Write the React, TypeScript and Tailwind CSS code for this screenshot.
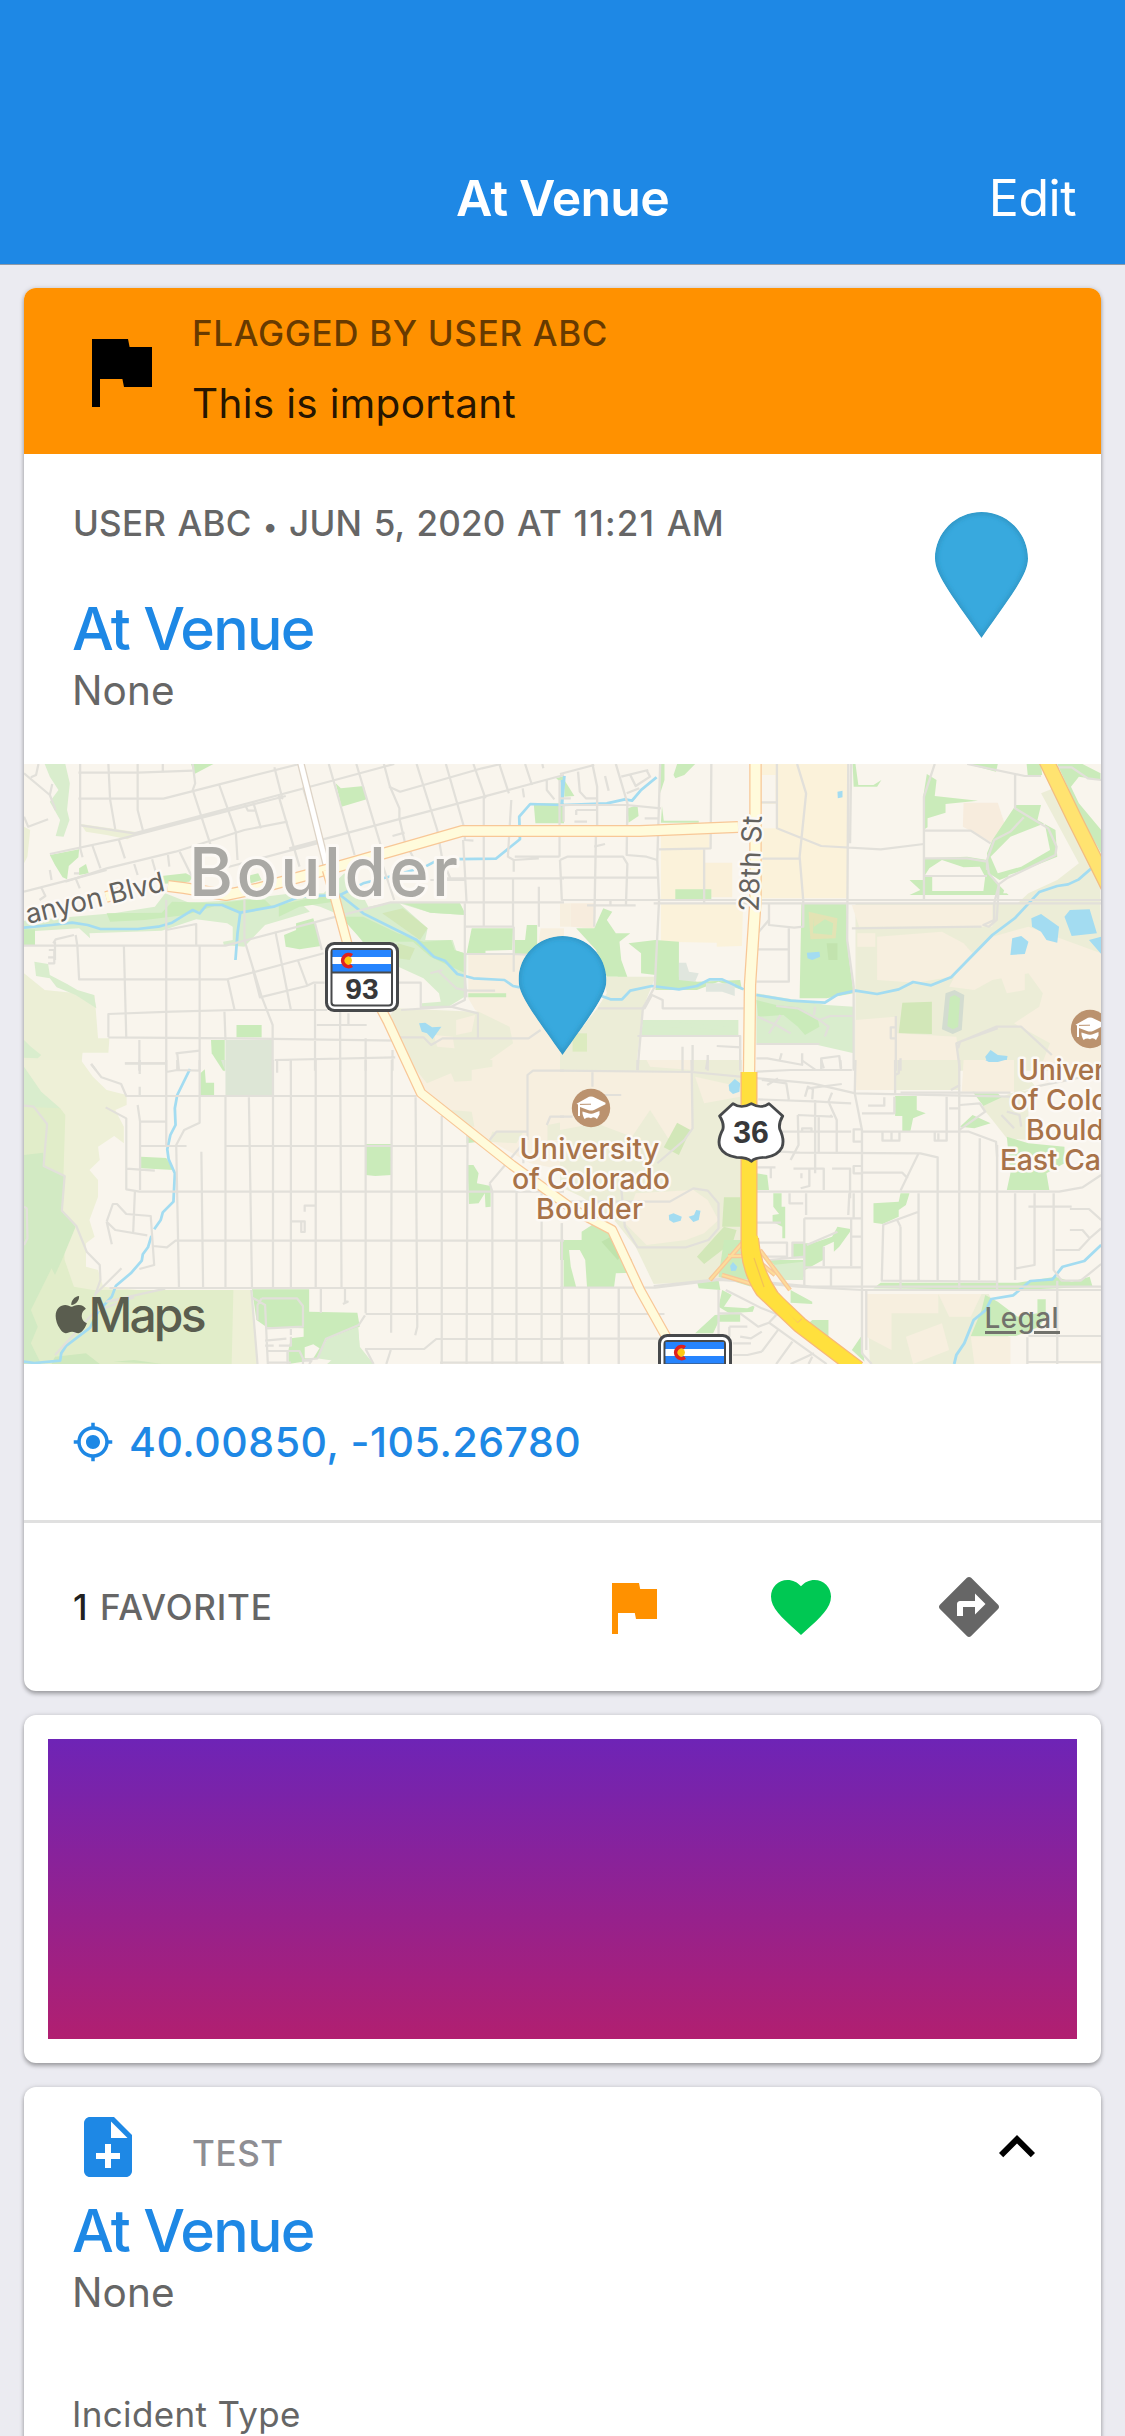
import React from "react";
import { FaApple } from "react-icons/fa";

const PIN_PATH =
  "M44 0C68.3 0 88 19.7 88 44C88 58 76 74 44 119C12 74 0 58 0 44C0 19.7 19.7 0 44 0Z";

function PinShape({ id }: { id: string }) {
  return (
    <>
      <defs>
        <clipPath id={`${id}-clip`}>
          <path d={PIN_PATH} />
        </clipPath>
        <filter id={`${id}-soft`} x="-20%" y="-20%" width="140%" height="140%">
          <feGaussianBlur stdDeviation="2.4" />
        </filter>
      </defs>
      <g clipPath={`url(#${id}-clip)`}>
        <path d={PIN_PATH} fill="#38a9de" />
        <path d={PIN_PATH} fill="none" stroke="#2a86b0" strokeWidth="2.4" filter={`url(#${id}-soft)`} />
      </g>
    </>
  );
}

function MaterialIcon({ d, className }: { d: string; className: string }) {
  return (
    <svg viewBox="0 0 24 24" fill="currentColor" className={className}>
      <path d={d} />
    </svg>
  );
}

const ICONS = {
  flag: "M14.4 6L14 4H5v17h2v-7h5.6l.4 2h7V6z",
  heart:
    "M12 21.35l-1.45-1.32C5.4 15.36 2 12.28 2 8.5 2 5.42 4.42 3 7.5 3c1.74 0 3.41.81 4.5 2.09C13.09 3.81 14.76 3 16.5 3 19.58 3 22 5.42 22 8.5c0 3.78-3.4 6.86-8.55 11.54L12 21.35z",
  directions:
    "M21.71 11.29l-9-9c-.39-.39-1.02-.39-1.41 0l-9 9c-.39.39-.39 1.02 0 1.41l9 9c.39.39 1.02.39 1.41 0l9-9c.39-.38.39-1.01 0-1.41zM14 14.5V12h-4v3H8v-4c0-.55.45-1 1-1h5V7.5l3.5 3.5-3.5 3.5z",
  gps: "M12 8c-2.21 0-4 1.79-4 4s1.79 4 4 4 4-1.79 4-4-1.79-4-4-4zm8.94 3A8.994 8.994 0 0 0 13 3.06V1h-2v2.06A8.994 8.994 0 0 0 3.06 11H1v2h2.06A8.994 8.994 0 0 0 11 20.94V23h2v-2.06A8.994 8.994 0 0 0 20.94 13H23v-2h-2.06zM12 19c-3.87 0-7-3.13-7-7s3.13-7 7-7 7 3.13 7 7-3.13 7-7 7z",
  noteAdd:
    "M14 2H6c-1.1 0-1.99.9-1.99 2L4 20c0 1.1.89 2 1.99 2H18c1.1 0 2-.9 2-2V8l-6-6zm2 14h-3v3h-2v-3H8v-2h3v-3h2v3h3v2zm-3-7V3.5L18.5 9H13z",
  expandLess: "M12 8l-6 6 1.41 1.41L12 10.83l4.59 4.58L18 14z",
};

/* Each map tile is drawn in its own local units and scaled into place. */
type Area = [string, string];
type Tile = { transform: string; areas: Area[]; streets: string[]; rivers: string[] };

const G = "#caebba";
const LG = "#d9edcd";
const OL = "#ecedd7";
const BE = "#f7efdf";
const TAN = "#fbf2da";
const W = "#a3dcf1";
const LAND = "#f9f5ed";

const TILES: Tile[] = [
  {
    transform: "translate(24 760) scale(0.34439 0.33333)",
    areas: [
      ["M0 640L60 690 205 705 215 835 248 835 245 878 170 878 165 932H0Z", "#ecefd6"],
      ["M30 605L70 612 75 645 125 672 155 690 203 705 210 745 150 705 95 682 75 655 35 648Z", LG],
      ["M0 840L20 860 50 885 40 895 0 893Z", LG],
      ["M0 200L18 210 10 290 0 310Z", "#ecefd6"],
      ["M60 12H120L133 70 125 150 132 180 115 230 92 228 105 180 75 125 100 90 75 50Z", LG],
      ["M75 285L160 268 158 292 130 318 125 358 112 352 90 315Z", G],
      ["M160 325L180 312 188 340 160 345Z", G],
      ["M485 12H550L495 42Z", G],
      ["M905 70L920 85 987 78 995 118 922 140 915 110Z", G],
      ["M165 192L340 218 300 238 240 225 180 215Z", "#ecefd6"],
      ["M0 482L140 470 260 460 380 440 410 400 480 428 620 420 780 400 870 400 930 340 985 410 1000 440 1060 428 1265 428 1283 465 1180 458 1090 430 1172 505 1165 540 1245 540 1255 572 1285 582 1283 708 1230 742 1155 742 1155 730 1210 725 1205 700 1160 655 1090 622 1040 548 985 548 930 470 860 440 800 425 830 455 700 495 640 560 580 555 578 545 606 540 606 500 590 490 500 478 400 512 190 520 192 535 160 505 0 515Z", LG],
      ["M380 350L470 340 490 350 480 365 400 372Z", G],
      ["M640 350L680 340 690 360 640 375Z", G],
      ["M240 460L400 458 430 425 580 430 470 465 350 480 250 485Z", G],
      ["M565 430L640 420 700 420 720 440 640 460 600 450Z", G],
      ["M740 435L850 410 900 410 900 425 800 440 740 470Z", G],
      ["M920 470L985 470 1085 520 1160 545 1240 540 1250 570 1280 580 1283 640 1240 620 1180 590 1130 545 1040 545 985 545Z", G],
      ["M1100 430L1265 428 1283 465 1180 458Z", G],
      ["M1040 460L1100 445 1172 505 1150 540Z", "#d2e7b8"],
      ["M1085 550L1135 565 1120 600 1085 595Z", "#d2e7b8"],
      ["M755 525L790 510 790 490 840 475 862 558 800 568 760 560Z", G],
      ["M0 508H32V555H0Z", G],
      ["M1300 505H1420L1418 570 1340 572 1340 582H1285Z", G],
      ["M1425 540H1455L1460 495H1490L1490 582H1425Z", G],
      ["M1480 130H1568V190H1485Z", G],
      ["M1545 55L1568 48V75Z", G],
      ["M1080 745L1310 755 1568 700V932H1135L1050 780Z", OL],
      ["M1290 585H1568V932H1360L1345 905 1420 850 1410 800 1310 750 1290 715Z", BE],
      ["M1500 505H1568V585H1490Z", BE],
      ["M1255 780L1310 765 1300 815 1255 825Z", BE],
      ["M1190 825L1245 830 1250 865 1200 860Z", BE],
      ["M1290 700H1400V712H1290Z", G],
      ["M617 795H690V832H617Z", G],
      ["M543 840H583V932H578L545 880Z", G],
      ["M585 840H722V932H585Z", "#dde6d6"],
      ["M1147 790L1165 788 1185 802 1212 800 1186 838 1170 820 1155 815Z", W],
    ],
    streets: [
      "M0 40L75 105 92 150M42 12L35 45 20 52M75 105L82 72M0 170L12 200 70 178",
      "M163 12V265L170 292M158 38H330L490 32M158 116H405L635 55 800 12M245 12L250 118 265 208M330 12V150L345 210M403 12V38",
      "M165 196L320 220 860 72 1075 12M75 282L275 238 760 108M120 365L240 325 440 275 640 210 765 185",
      "M0 395L150 355 240 330M275 238L293 295M198 255L222 325M320 312L330 345M372 298L385 345M418 285L422 320M452 275L490 355M50 382L62 408 45 420M75 330L80 360M145 340H160M150 355L162 385",
      "M490 12L497 70 490 90 545 265M567 75L615 215 620 300M640 130L650 152H670M665 125L688 205M727 22L750 115 740 110 800 320M810 82L830 150",
      "M885 12L960 285M965 12L1040 270M1045 12L1062 78 1090 145V175L1110 265M1140 12L1200 210 1215 300M1225 12L1280 210V240L1305 242M1305 12L1340 115M1380 12L1408 100M1455 12L1475 75M1505 12L1508 25",
      "M770 265L1335 110 1568 45M560 330L870 245M1060 80L1092 95 1330 25 1385 12M1070 228L1105 218M1335 110V500M1415 120L1405 290 1422 300V335M1448 85L1452 112M1518 60V90L1540 118",
      "M1220 355H1568M1422 300L1495 295M1425 290L1555 290M1555 60V290M1275 240L1285 425M1215 300L1240 360M1120 272L1165 360M1180 360H1280M1033 290L1075 420",
      "M413 420V932M413 510L500 492V555M0 557H585L1065 427H1568M640 420L640 540 690 710 722 795V932M510 557V932M290 557L297 835M150 525L155 558 160 658H590L870 580M85 550L92 538 145 525",
      "M72 570H88V610H70M70 592H88M90 545V600M730 515L775 750M592 660L612 752M665 630L685 712 820 678 840 668 873 668M795 600L822 675M845 490L865 570",
      "M245 832V762L430 755 610 750H880M245 832L610 835 1085 842M582 755L585 840M845 672V932M1080 668H1152V742L1240 740 1280 720V430M1095 750L1240 740 1318 760V832M1085 832H1160L1182 855 1215 835H1465L1500 810",
      "M850 795H995M942 760V795M918 755V932M992 835V932M728 900L1078 892M1070 870V932M775 900V932M335 840V932M440 880L510 872M445 880L450 932M293 910H413M195 912L210 932",
      "M1283 500H1420V355M1283 582H1420L1568 590M1495 380V500M1422 500V635M1205 635L1255 685 1290 692H1368M1180 640L1215 630M1285 712L1280 650",
    ],
    rivers: [
      "M0 503L80 495 140 488 185 495 222 507H330L390 500 430 488 490 450 510 460 530 435 575 435 628 458 725 440 800 410 918 405 985 460 1140 540 1190 590 1222 602 1258 642 1305 655 1395 660 1420 678 1440 682",
      "M628 458L620 520 614 600M918 405L985 370 1080 345 1165 320 1205 298 1370 296 1440 238 1438 170 1470 132 1562 135V60",
    ],
  },
  {
    transform: "translate(560 760) scale(0.36033 0.33333)",
    areas: [
      ["M560 12H800V415H560Z", TAN],
      ["M560 45H598V125H560ZM560 132H600V205H560Z", LAND],
      ["M280 222H415V268H280ZM280 270H400V420H280Z", TAN],
      ["M402 308H478V412H402Z", "#faf0d9"],
      ["M280 432H508L505 558 435 560 435 548 280 545Z", TAN],
      ["M320 388H420V418H320Z", G],
      ["M278 12H290V60L278 100ZM315 45L325 12H375L345 45 320 55Z", G],
      ["M12 60L40 108 12 110Z", G],
      ["M188 145L215 135 218 168 190 188Z", G],
      ["M283 138L288 182H385V188H280Z", G],
      ["M0 430H30V500L95 505 100 450 50 455V500H0Z", BE],
      ["M30 430H95V505L30 500Z", "#f7ecdd"],
      ["M45 505L95 505 120 445 145 455 130 480 155 520 195 520 165 545 170 600 190 660 165 660 160 650 130 650 100 570Z", G],
      ["M190 550L265 540 330 545V650L380 665 500 660 505 690 440 665 380 690H265L265 645 225 640 225 580Z", G],
      ["M330 608H350L358 635 385 640 375 665 330 660Z", "#e0e6de"],
      ["M405 670H485V708L450 695H405Z", "#e0e6de"],
      ["M120 650L265 650 230 745 210 932H0V885L100 750 130 700Z", OL],
      ["M35 820H75V875H35Z", "#dcebc0"],
      ["M230 780H495V830L225 828Z", LG],
      ["M232 780H492V750L260 745Z", LAND],
      ["M225 780L480 800 490 815 390 805 230 798Z", LG],
      ["M265 705L500 715V745L290 740Z", LAND],
      ["M545 700L740 735 815 740V880L715 855 545 850Z", LG],
      ["M550 770L620 765 660 800 680 825 720 800 715 775 660 742 600 735 545 720Z", G],
      ["M670 432H795L800 580 815 700 740 715 665 715Z", G],
      ["M690 455L770 475 765 535 695 538ZM705 470L702 520 755 525 758 490 735 478 705 500Z", "#e3e3b4"],
      ["M740 550H770V600H745Z", "#c2e3ae"],
      ["M812 12H820L828 75H870L892 60 880 80H815Z", G],
      ["M1018 42L1045 60 1040 108 1160 122 1070 132 1070 158 1020 175V202L1008 210V110Z", G],
      ["M1130 12H1215L1210 35Z", G],
      ["M1295 12H1335L1338 45H1298Z", G],
      ["M1380 12H1450L1500 40V60L1440 50 1418 80 1440 130 1502 210V280L1450 180Z", G],
      ["M1120 128H1215L1238 205 1200 248 1118 200Z", "#f7ecdd"],
      ["M1335 100L1380 80 1500 320V480H1502V932H820V430H1270L1300 400 1380 360 1440 310Z", OL],
      ["M810 435H1200V500H830Z", BE],
      ["M1265 135H1335L1325 180 1375 210 1380 290 1220 360 1190 340 1185 280 1200 240Z", G],
      ["M1250 230L1345 190 1360 270 1280 320 1215 340 1195 290Z", LAND],
      ["M1012 295L1130 290 1185 300 1200 355 1245 405H970L1000 390 970 360H1010Z", G],
      ["M1025 325L1060 300 1120 322 1165 320 1180 350 1175 393H1033V350H1010Z", LAND],
      ["M1245 345L1400 290 1420 320 1300 360 1280 400 1230 400Z", LAND],
      ["M880 530L1060 515 1120 550 1145 580 1085 650 990 668 880 660Z", BE],
      ["M825 520H875V560H825ZM820 780L930 770 935 932H820Z", BE],
      ["M1120 600L1200 530 1300 500 1502 580V932H1330L1360 850 1260 790 1330 740 1340 700 1300 640 1200 660 1150 690 1080 680Z", BE],
      ["M1220 640L1290 630V690L1240 700Z", BE],
      ["M950 728L1032 725V822L940 820Z", "#d2e7b8"],
      ["M1070 700L1095 690 1122 705 1115 810 1090 822 1060 808Z", "#d3dcd0"],
      ["M1082 712L1095 705 1110 715 1105 800 1090 808 1075 798Z", "#caebba"],
      ["M935 820L1100 830 1110 932H935Z", BE],
      ["M1308 475L1335 462 1385 500 1380 548 1350 540 1335 515 1310 500ZM1400 470L1415 450 1470 448 1490 520 1420 528ZM1255 535L1280 528 1300 545 1290 582 1250 585ZM1468 540L1502 530V582ZM770 95L784 92V112L771 115ZM685 578L720 575 722 590 700 600 687 595ZM1180 890L1195 870 1215 885 1242 888 1240 900 1185 905Z", W],
    ],
    streets: [
      "M0 42L95 15M50 35L55 95 72 115H100M90 12L103 80V210M155 12L187 130 185 285 240 290 270 300M170 50L245 30M195 45L210 78 250 50 240 30M125 48L135 92M185 100L220 85M0 115H30M45 150H105M45 150V165M40 185H75M10 135V185M100 210L95 500M235 175H275",
      "M278 12L270 300 275 420 263 680 230 745 215 932M420 12L418 265 275 268M0 300L20 290H175L187 312 183 435M0 300L5 420H1502M0 353H270M95 260L125 252M140 420V435M75 436H210M0 135H185L280 145",
      "M400 268V430M602 12V205L725 258 890 268 1010 252M558 127H602M658 12L683 100 665 290 675 420V500L650 503 580 495V430M560 296H665M808 12L805 250M800 12L797 540 815 680V932",
      "M260 430H1502M1010 420V110L1040 12M1010 212H1140L1195 250M1010 295H1130L1185 305V330M1010 348H1185M1263 40V145L1355 205 1378 260 1375 285 1240 355 1215 375M1130 12L1290 48H1335M1287 172L1250 215 1205 240 1185 300 1190 340 1218 375 1205 430M1380 22H1420L1465 55 1502 60",
      "M1218 375L1212 480 1190 500 1175 495 1205 480V430M810 505L1170 500M580 480L548 520V562M545 568H635M635 505V665H545M105 745H235L255 705 285 720V745H510M215 828H500V932M340 860V932M368 855V932M410 885V932M435 858L503 862",
      "M548 770L600 795 640 820M580 820L612 765M600 738L660 745 720 780 750 768H812M720 780L745 800 735 830M708 740L705 765M545 852H720M545 895H575L675 915M615 880L610 900M672 880V915M725 932V895L775 888 780 932M932 768V932M930 802H918V835H930M945 895V932",
      "M1110 932L1100 850 1210 800H1280L1365 885M1105 865L1110 845 1215 805",
    ],
    rivers: [
      "M12 48L5 135 130 130 180 118 200 122 225 90 268 52",
      "M115 708L140 718H172L195 692 255 678 330 688 380 678 415 658H450L510 688M545 705L640 722 735 728 770 704 820 692 880 702 940 688 980 666 1030 676 1085 652 1200 525 1262 475 1330 396 1380 378 1410 373 1440 358 1475 325",
    ],
  },
  {
    transform: "translate(24 1060) scale(0.34439 0.33333)",
    areas: [
      ["M0 0H165L200 50 240 90 298 105V135L265 150 290 200V250L262 228 215 260 220 300 190 330 215 360 215 410 190 480 205 530 180 550V620L215 630 230 680 330 690H660L678 912H0Z", "#eef0d7"],
      ["M0 20L50 95 105 145V165L0 145Z", LG],
      ["M0 140L105 145 120 165 112 430 118 600 145 680 200 690H608L603 912H0Z", "#e1edc9"],
      ["M0 285L55 278 60 320 120 348 110 450 150 500 110 600 90 645 80 625 20 750 40 800 20 850 50 912H0Z", "#d2eac3"],
      ["M80 912L90 890 180 880 220 912ZM260 905L320 900 400 912Z", "#cfe8bd"],
      ["M570 0L583 0V35ZM512 40L525 28 528 68H552V108H512Z", G],
      ["M572 0H583V30ZM585 0H722V105H585Z", "#dde6d6"],
      ["M340 290L413 294 435 330 340 325Z", G],
      ["M992 252H1067V345L1020 348 992 345Z", G],
      ["M1288 315L1305 315 1320 340 1315 370 1355 378V440L1340 442 1338 400 1320 430 1292 432Z", G],
      ["M1285 225L1320 245 1285 250Z", G],
      ["M1115 0H1568V330L1470 310 1290 205 1165 90Z", BE],
      ["M1115 0H1360V20L1300 30V62L1250 65 1240 40 1170 70ZM1240 150L1300 155 1308 200 1270 195ZM1520 195L1568 185V240H1520ZM1360 215H1450L1430 250 1350 245Z", OL],
      ["M662 688H828V755L968 758 975 800 880 838 850 895 810 905 768 912V870L775 835 812 830V805L705 802 675 780Z", G],
      ["M970 800L975 860 1015 912H880L950 850Z", LG],
      ["M850 895L880 838 970 800 975 870 920 905Z", LG],
      ["M815 862L840 853 858 865 840 895 815 895Z", LAND],
    ],
    streets: [
      "M0 137L28 140 67 192 57 318 118 348 110 452 152 498 182 575 220 615 222 660 205 710M0 440L8 445 10 535 0 555M195 12L225 52 282 72 297 108H1140M293 10H413M336 0V42M336 80V105M413 0V255M413 36L445 30 510 32M445 0V30M510 0V188L465 210 442 255 450 683M237 142L297 175V388L335 395H1568M330 135L337 185V390M337 185H413M337 258H472M297 326L380 332",
      "M240 485L258 432H270L297 462 368 468 378 615 335 627M240 485L265 510 358 526M240 485L255 553M322 395L317 518M375 558L415 562 440 542H1568M515 275L520 683M585 110V683M585 258H1288M653 112L662 683M248 684H1568M723 0V683M775 0V683M847 0V683M918 0L922 683M992 0V760M1068 0L1066 818M1137 112L1142 800 1136 826M1213 168V912M1288 220L1285 912M1360 395V912M1430 395V912M1503 400V912M1562 490V912",
      "M845 437H815V455M775 484H815V516H805V484M735 38V0H770M283 625L210 700M320 712L240 725 410 686M320 712L205 755 90 885M660 690L678 912M662 712L700 735 708 912M690 715H793L810 738V800L705 805M678 780V735L690 715M862 685V758M932 685V725H940L926 732M992 762H1568M990 766L972 795 877 836 852 895 810 900M990 867H1162L1197 837H1568M992 867L1015 912M1065 870L1052 912M1208 908H1568M700 842L762 836M700 857H725M740 857H775V830M775 800V825M706 873H800L810 895V912M765 873V912M808 902H835L828 912M708 908H775M1352 370L1360 395M1352 370L1450 250V310M1352 240L1372 215H1462V45L1478 32H1568M1462 215V240M1518 195L1528 170H1568",
    ],
    rivers: [
      "M482 27L445 105 438 145 440 195 425 225 416 268 420 298 438 340 434 425 403 457 397 480 378 508M370 528L360 562 345 583 342 602 310 640 267 677 255 710 215 755 192 803 122 858 108 880 105 902 30 909 0 905",
    ],
  },
  {
    transform: "translate(560 1060) scale(0.36033 0.33333)",
    areas: [
      ["M0 0H505V660L260 672 210 560 150 480 60 410 0 380Z", OL],
      ["M0 35L365 36 370 210 300 235 250 150 200 230 100 190 0 210ZM375 50L500 80 500 110 400 130ZM180 490L210 400 370 390 410 420 440 480 400 520 350 540 240 555Z", BE],
      ["M240 0L365 0 365 30 250 20Z", BE],
      ["M325 188L362 210 330 285 288 262Z", "#d2e7b8"],
      ["M455 412H500V500H450ZM455 500L490 510 480 545 400 612 380 590Z", "#d2e7b8"],
      ["M0 540H60V515L110 480 145 500 170 550 200 600V638L155 640 150 682H75L70 600 55 570 25 570 30 620 45 682H10V600H0Z", G],
      ["M115 545L160 520 185 570 160 600Z", "#bfe3ac"],
      ["M545 340L575 345 580 390H545ZM592 400H615V440H625V535H617V500L590 485V465L608 462 592 440Z", G],
      ["M645 550H700L755 530 770 500 810 508 775 560 760 575V545L730 560V600L680 630V595H645Z", G],
      ["M580 600H680V650H630Z", G],
      ["M590 615L675 605V660H620Z", LG],
      ["M930 108H990V150L1015 160 980 175 972 215H950V168H930Z", G],
      ["M820 0H930V90H820ZM1120 0H1260V95H1115Z", BE],
      ["M930 0H1110V90H930ZM1260 0L1320 80 1260 100Z", OL],
      ["M1110 200L1145 165 1195 190 1150 205ZM1145 95L1215 100 1240 130 1180 145Z", G],
      ["M1170 140L1250 100 1300 90 1300 240 1240 235 1200 180Z", OL],
      ["M1240 230L1300 250 1400 260V310L1350 340 1358 390 1240 390 1250 340Z", G],
      ["M870 430L940 425 945 400H970L960 435 940 450V470L895 492 870 488Z", G],
      ["M870 685L890 668H1270L1375 650 1420 665 1470 650 1478 680 1270 690Z", G],
      ["M852 702H1190L1245 830V912H860Z", OL],
      ["M852 702H1050V760H920V870L850 830ZM1050 702H1170L1140 770 1080 770ZM960 830L1060 790 1080 870 980 912ZM1140 830H1250V912H1150Z", BE],
      ["M1180 705L1215 725 1270 770 1325 760V718H1348V770L1330 800 1265 828H1140L1170 750Z", G],
      ["M455 540L505 540 500 570 530 680 440 650Z", G],
      ["M380 665L440 660 445 690 385 685ZM450 690L540 740 535 755 470 760 440 740Z", G],
      ["M480 700L540 735 520 745 455 740Z", LAND],
      ["M640 690L700 725V732L640 728ZM700 780H745V830L690 790ZM810 870L835 830 845 905Z", G],
      ["M375 820L430 765 500 760V785L440 785 425 820Z", G],
      ["M468 75L485 57 500 70 498 95 480 102 470 92ZM302 465L315 460 338 470 335 482 315 488 303 480ZM357 470L372 465 378 450 390 452 385 480 370 486ZM472 618L480 606 492 620 488 632 475 633ZM1180 0H1235L1215 6H1190Z", W],
    ],
    streets: [
      "M0 32L365 36 500 50 700 70 820 100 1250 110M90 32V80M365 0L368 205 345 240 270 310M215 0V30M410 0L405 28M75 105H170M0 170H35M0 425H305L370 385 410 392 440 430V505L412 540 350 562H215L180 500 170 385M5 490V912M0 683H265L440 660 520 665 660 680 840 690H1502M80 683V912M163 683V912M0 762H290M0 836H305",
      "M260 678L460 655 700 680H1502M545 35L640 30 810 30M670 0L710 30M725 0L732 25M778 0L780 25M820 0L818 100 838 210V880L865 912M850 690V870M605 55L575 75M560 60L628 70 635 118M550 118L720 125 765 128 808 130M680 110L688 80 702 88 700 118M688 85L782 72M755 98L745 125 768 180V275M708 120V340M718 165V275M660 165L755 170 750 165M660 165L662 255 640 300M600 215L808 215M672 215V205H698V215M610 275L665 278 1000 280 1048 292V660",
      "M548 322H598M585 322V355M648 326H732V390M755 326H805V415M668 385L692 378V326M545 395H1385L1450 382 1502 345M637 400V430H675M683 400V465M803 400L800 465M815 400V472M678 475H838M678 475V680M545 488H613M685 555L770 515M645 590V548H675M545 548H630V590H550M580 600L680 590M680 622H838M732 560V618M752 622V680M808 475V618M808 530H838",
      "M840 338H950L965 355M995 280L945 392M1108 0V685M995 400V660M1165 235L1163 660M895 495L995 455M945 500V690M945 500L935 478M897 495L893 662 1212 665M1213 255V690M1263 400V660M1317 400V615L1265 625M1370 400V630L1392 662H1445L1502 612M1380 662V912",
      "M838 215H1135L1210 245 1213 290M838 160H928V110M855 137H900V112M838 208H815V245H838M838 318H815V340H838M895 218V242H942V218M920 218V240M1040 218V242H1073V110M1050 240V220M1108 210L1180 155 1165 130 1110 135M1080 145H1105M930 0V90M940 0V40L930 45V105M1085 90L1110 75M945 98H1250M1225 165L1260 205M1240 155L1275 165 1280 200M1415 447H1468L1502 480M1415 510H1450L1470 535 1502 505M1470 535L1440 570H1375M1300 828H1502M1297 832V912M1300 906H1502M1320 80L1502 40",
      "M440 690V912M440 760H500L550 800 580 788 740 912M580 788L600 765M460 690L560 745 620 770M470 800H520M470 800V830M500 830L530 835 560 815M480 850H530M560 875L605 810M600 912L645 845M640 912L705 880M480 885H520L560 875M690 912L700 890",
      "M265 762L295 830M670 340V355M1300 440H1420",
    ],
    rivers: ["M1502 555L1455 603 1395 620 1367 658 1305 663 1258 706 1197 717 1182 750 1148 780 1122 850 1100 885 1094 912"],
  },
];

function Road({ d, width, fill, edge }: { d: string; width: number; fill: string; edge: string }) {
  return (
    <g fill="none" strokeLinejoin="round">
      <path d={d} stroke={edge} strokeWidth={width + 2} />
      <path d={d} stroke={fill} strokeWidth={width - 0.5} />
    </g>
  );
}

function StateShield({ x, y, route }: { x: number; y: number; route?: string }) {
  return (
    <g transform={`translate(${x} ${y})`}>
      <rect width="74" height="70" rx="9" fill="#47494b" />
      <rect x="3" y="3" width="68" height="64" rx="6.5" fill="#fff" />
      <rect x="5.5" y="6" width="62.5" height="58.5" rx="4" fill="#47494b" />
      <path d="M7.5 8H66V29.5H7.5Z" fill="#2684fe" />
      <path d="M7.5 15H66V22H7.5Z" fill="#fff" />
      <path d="M7.5 31.5H66V60Q66 62.5 63.5 62.5H10Q7.5 62.5 7.5 60Z" fill="#fff" />
      <circle cx="22.3" cy="18.6" r="4.6" fill="#fdc913" />
      <path d="M27 13.6A6 6 0 1 0 27 23.6" fill="none" stroke="#e0211f" strokeWidth="3.6" />
      {route && (
        <text x="37" y="57" textAnchor="middle" fontSize="30" fontWeight="700" fill="#37383a" className="font-['Liberation_Sans',sans-serif]">
          {route}
        </text>
      )}
    </g>
  );
}

function CampusBadge({ x, y }: { x: number; y: number }) {
  return (
    <g transform={`translate(${x} ${y})`}>
      <circle r="19.2" fill="#bb926e" />
      <g fill="#fff">
        <path d="M-14.5 -4.2L-2 -11.2Q0 -12 2 -11.2L14.5 -5.2 14.5 -3.8 3 2Q0 3 -3 2L-11 -1V8H-13V-3.4Z" />
        <path d="M-8.5 3.4L-2 5.6Q0 6 2 5.4L8.5 3V6.5L6 11Q3 8.200 0 10.200Q-3 8.600 -6.5 11Q-9 6 -8.5 3.4Z" />
      </g>
      <path d="M-11 -3.600L0 -3.800" stroke="#bb926e" strokeWidth="1" />
    </g>
  );
}

const LABEL = "font-['Inter',sans-serif]";

function HaloText({
  x,
  y,
  size,
  fill,
  length,
  weight = 500,
  rotate = 0,
  halo = 5,
  children,
}: {
  x: number;
  y: number;
  size: number;
  fill: string;
  length?: number;
  weight?: number;
  rotate?: number;
  halo?: number;
  children: string;
}) {
  return (
    <text
      transform={`translate(${x} ${y}) rotate(${rotate})`}
      fontSize={size}
      fontWeight={weight}
      fill={fill}
      stroke="#fcf9f5"
      strokeWidth={halo}
      strokeLinejoin="round"
      paintOrder="stroke"
      textLength={length}
      className={LABEL}
    >
      {children}
    </text>
  );
}

function VenueMap() {
  const brown = "#a87349";
  return (
    <svg viewBox="24 764 1077 600" className="block h-[600px] w-full overflow-hidden">
      <rect x="24" y="764" width="1077" height="600" fill={LAND} />
      {TILES.map((t, i) => (
        <g key={i} transform={t.transform}>
          {t.areas.map(([d, fill], j) => (
            <path key={j} d={d} fill={fill} fillRule="evenodd" />
          ))}
        </g>
      ))}
      {TILES.map((t, i) => (
        <g key={i} transform={t.transform} fill="none" strokeLinejoin="round">
          {t.rivers.map((d, j) => (
            <path key={j} d={d} stroke={W} strokeWidth="8" />
          ))}
          {t.streets.map((d, j) => (
            <path key={j} d={d} stroke="#e2e0da" strokeWidth="6.5" />
          ))}
        </g>
      ))}

      <Road d="M300 760L328 872" width={5.5} fill="#fff" edge="#ddd3c6" />
      <Road d="M106 897L124 892M168 886L184 888 226 895 256 889 340 866 462 831H640L738 827" width={10} fill="#fffbdb" edge="#f8c797" />
      <Road d="M327 870L334 894 348 946 388 1022 421 1093 512 1165 574 1210 612 1230 640 1290 668 1340" width={8.5} fill="#fffbdb" edge="#f8c797" />
      <Road d="M755.500 764V900L750 985 749 1078" width={10.5} fill="#fffbdb" edge="#f8c797" />
      <Road d="M710 1280L745 1240M722 1275L752 1284 790 1315M728 1256H752L775 1275M760 1250L790 1290" width={2.5} fill="#fddc9a" edge="#f8c797" />
      <Road d="M1046 760L1074 818 1112 894" width={14} fill="#ffe370" edge="#f3bd80" />
      <path d="M749 1072V1250Q751 1272 763 1290L800 1325 858 1369" fill="none" stroke="#f8b878" strokeWidth="17" />
      <path d="M749 1072V1250Q751 1272 763 1290L800 1325 858 1369" fill="none" stroke="#ffe03d" strokeWidth="14.500" />
      <path d="M756 1238Q758 1268 776 1294L800 1321" fill="none" stroke="#f8b878" strokeWidth="6" />
      <path d="M754.500 1236Q756.500 1268 774 1294L800 1320" fill="none" stroke="#ffe03d" strokeWidth="6.500" />
      <path d="M754 1258L764 1287" stroke="#f3c155" strokeWidth="1.2" />

      <HaloText x={28} y={924} size={27.5} fill="#64625e" length={142} rotate={-13.6} weight={400}>
        anyon Blvd
      </HaloText>
      <HaloText x={758.5} y={912} size={27.5} fill="#64625e" length={96} rotate={-88} weight={400}>
        28th St
      </HaloText>
      <HaloText x={189} y={896} size={67} fill="#aaa9a5" length={269} halo={6} weight={500}>
        Boulder
      </HaloText>

      <StateShield x={325} y={942} route="93" />
      <StateShield x={658} y={1334} />

      <CampusBadge x={591} y={1108} />
      <CampusBadge x={1090} y={1029} />
      <HaloText x={519.5} y={1159} size={28.5} fill={brown} length={140}>
        University
      </HaloText>
      <HaloText x={512} y={1189} size={28.5} fill={brown} length={158}>
        of Colorado
      </HaloText>
      <HaloText x={536} y={1219} size={28.5} fill={brown} length={107}>
        Boulder
      </HaloText>
      <HaloText x={1018} y={1080} size={28.5} fill={brown} length={87}>
        Univer
      </HaloText>
      <HaloText x={1010.5} y={1110} size={28.5} fill={brown} length={98}>
        of Colo
      </HaloText>
      <HaloText x={1026} y={1140} size={28.5} fill={brown} length={78}>
        Bould
      </HaloText>
      <HaloText x={1000} y={1170} size={28.5} fill={brown} length={101}>
        East Ca
      </HaloText>

      <g transform="translate(560 1060) scale(0.36033 0.33333)">
        <path
          d="M480 131Q503 148 531 131Q558 148 580 131L618 168Q606 190 610 208Q624 240 616 262Q604 287 572 292Q542 292 531 304Q520 292 490 292Q456 287 444 262Q436 240 452 208Q456 190 443 168Z"
          fill="#fff"
          stroke="#47494b"
          strokeWidth="8"
          strokeLinejoin="round"
        />
      </g>
      <text x="751" y="1143" textAnchor="middle" fontSize="32" fontWeight="700" fill="#37383a" className="font-['Liberation_Sans',sans-serif]">
        36
      </text>

      <g transform="translate(50 1293.400)">
        <FaApple size={42.5} color="#5a5d4f" />
      </g>
      <text x="88.500" y="1332" fontSize="48" fontWeight="500" fill="#5a5d4f" textLength="118" className={LABEL}>
        Maps
      </text>
      <text x="984.500" y="1328" fontSize="28" fontWeight="500" fill="#72726c" textLength="74" className={LABEL}>
        Legal
      </text>
      <path d="M985 1332.500H1016M1034 1332.500H1060" stroke="#72726c" strokeWidth="3" />

      <g transform="translate(518.500 936)">
        <PinShape id="map-pin" />
      </g>
    </svg>
  );
}

function Card({ className = "", children }: { className?: string; children: React.ReactNode }) {
  return (
    <section
      className={`overflow-hidden rounded-[12px] bg-white shadow-[0_3px_4px_rgba(0,0,0,0.28),0_0_5px_rgba(0,0,0,0.14)] ${className}`}
    >
      {children}
    </section>
  );
}

export default function App() {
  return (
    <div className="flex h-[2436px] w-[1125px] flex-col overflow-hidden bg-[#ebebf1] font-['Inter',sans-serif] whitespace-nowrap">
      <header className="grid h-[265px] shrink-0 grid-cols-3 items-end border-b border-[#8f9aa8] bg-[#1e88e5] px-[48px] pb-[36px] text-white">
        <span />
        <h1 className="text-center text-[50px] leading-[60px] font-semibold tracking-[-0.8px]">At Venue</h1>
        <button className="justify-self-end pr-[1px] text-[50px] leading-[60px] tracking-[-0.5px]">Edit</button>
      </header>

      <main className="flex flex-col gap-[24px] px-[24px] pt-[23px]">
        <Card className="h-[1403px]">
          <div className="flex h-[166px] items-center bg-[#ff9100] pl-[48px]">
            <MaterialIcon d={ICONS.flag} className="size-[96px] text-black" />
            <div className="-mt-[3px] flex flex-col pl-[24px]">
              <p className="text-[35px] leading-[42px] font-medium tracking-[0.65px] text-black/60">FLAGGED BY USER ABC</p>
              <p className="mt-[26px] text-[40.5px] leading-[48px] tracking-[0.3px] text-black/87">This is important</p>
            </div>
          </div>

          <div className="flex h-[310px] justify-between pr-[73px] pl-[48px]">
            <div className="flex flex-col pt-[48px]">
              <p className="pl-[1px] text-[35px] leading-[42px] font-medium tracking-[0.2px] text-[#666] [word-spacing:1.9px]">
                USER ABC <span className="text-[27px]">•</span> JUN 5, 2020 AT <span className="tracking-[1.2px]">11:21</span> AM
              </p>
              <h2 className="mt-[45px] text-[59px] leading-[72px] font-medium tracking-[-1.7px] text-[#1e88e5]">At Venue</h2>
              <p className="mt-[2px] text-[40.5px] leading-[48px] tracking-[0.1px] text-[#666]">None</p>
            </div>
            <svg viewBox="0 0 88 119" className="mt-[58px] h-[126px] w-[93px]">
              <PinShape id="card-pin" />
            </svg>
          </div>

          <VenueMap />

          <div className="flex h-[156px] items-center pl-[48px]">
            <MaterialIcon d={ICONS.gps} className="size-[42px] text-[#1e88e5]" />
            <span className="pl-[15px] text-[41px] leading-[48px] font-medium tracking-[0.55px] text-[#1e88e5]">
              40.00850, -105.26780
            </span>
          </div>

          <div className="flex h-[171px] items-center justify-between border-t-[3px] border-[#e0e0e0] pr-[96px] pl-[48px]">
            <p className="pl-[1px] text-[35px] leading-[42px] font-medium tracking-[0.8px] text-[#666] [word-spacing:1.5px]">
              <span className="text-[#212121]">1</span> FAVORITE
            </p>
            <div className="flex gap-[96px]">
              <MaterialIcon d={ICONS.flag} className="size-[72px] text-[#ff9100]" />
              <MaterialIcon d={ICONS.heart} className="size-[72px] text-[#00c853]" />
              <MaterialIcon d={ICONS.directions} className="size-[72px] text-[#666]" />
            </div>
          </div>
        </Card>

        <Card className="p-[24px]">
          <div className="h-[300px] bg-linear-to-b/srgb from-[#6e24b6] to-[#b11f70]" />
        </Card>

        <Card className="h-[400px] pt-[24px] pr-[48px] pl-[48px]">
          <div className="flex h-[72px]">
            <MaterialIcon d={ICONS.noteAdd} className="size-[72px] text-[#1e88e5]" />
            <p className="mt-[21px] ml-[48px] flex-1 text-[35px] leading-[42px] font-medium tracking-[0.6px] text-[#8e8e93]">TEST</p>
            <MaterialIcon d={ICONS.expandLess} className="size-[72px] text-black" />
          </div>
          <h2 className="mt-[12px] text-[59px] leading-[72px] font-medium tracking-[-1.7px] text-[#1e88e5]">At Venue</h2>
          <p className="mt-[2px] text-[40.5px] leading-[48px] tracking-[0.1px] text-[#666]">None</p>
          <p className="mt-[76px] text-[35px] leading-[42px] tracking-[0.35px] text-[#666]">Incident Type</p>
        </Card>
      </main>
    </div>
  );
}
